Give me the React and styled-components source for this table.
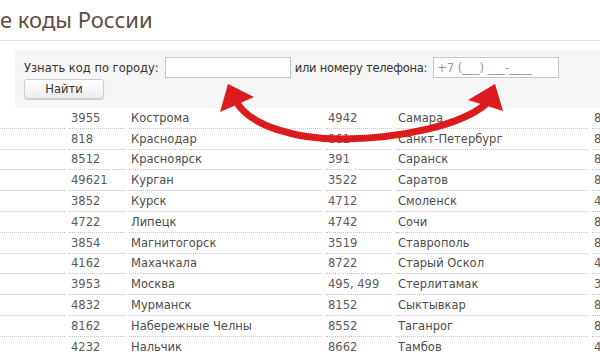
import React from "react";
import styled, { createGlobalStyle } from "styled-components";

const rows = [
  ["3955", "Кострома", "4942", "Самара", "8482"],
  ["818", "Краснодар", "861", "Санкт-Петербург", "8442"],
  ["8512", "Красноярск", "391", "Саранск", "8552"],
  ["49621", "Курган", "3522", "Саратов", "8422"],
  ["3852", "Курск", "4712", "Смоленск", "4872"],
  ["4722", "Липецк", "4742", "Сочи", "8512"],
  ["3854", "Магнитогорск", "3519", "Ставрополь", "8452"],
  ["4162", "Махачкала", "8722", "Старый Оскол", "4822"],
  ["3953", "Москва", "495, 499", "Стерлитамак", "3822"],
  ["4832", "Мурманск", "8152", "Сыктывкар", "8352"],
  ["8162", "Набережные Челны", "8552", "Таганрог", "8202"],
  ["4232", "Нальчик", "8662", "Тамбов", "4212"],
];

const App = () => {
  return (
    <Page>
      <GlobalStyle />
      <Title>е коды России</Title>

      <SearchPanel>
        <SearchRow>
          <Label>Узнать код по городу:</Label>
          <TextInput type="text" />
          <Label tight>или номеру телефона:</Label>
          <TextInput type="text" placeholder="+7 (___) ___-____" />
        </SearchRow>
        <FindButton>Найти</FindButton>
      </SearchPanel>

      <CodesTable>
        <tbody>
          {rows.map((r, i) => (
            <tr key={i}>
              <Cell w={63}></Cell>
              <Cell w={54} code>{r[0]}</Cell>
              <Cell w={191}>{r[1]}</Cell>
              <Cell w={64} code>{r[2]}</Cell>
              <Cell w={190}>{r[3]}</Cell>
              <Cell w={60} code>{r[4]}</Cell>
            </tr>
          ))}
        </tbody>
      </CodesTable>

      {/* red double arrow drawn over the page */}
      <ArrowLayer viewBox="0 0 600 355" width="600" height="355">
        <path
          d="M 237 103 C 252 127, 300 140, 345 139 C 400 138, 460 126, 486 104"
          fill="none"
          stroke="#dc1c1c"
          strokeWidth="7"
        />
        <polygon points="228,84 254,97 220,112" fill="#dc1c1c" />
        <polygon points="495,84 503,111 468,100" fill="#dc1c1c" />
      </ArrowLayer>
    </Page>
  );
};

const GlobalStyle = createGlobalStyle`
  html, body {
    margin: 0;
    padding: 0;
    background: #fff;
    overflow: hidden;
  }
  body {
    font-family: "DejaVu Sans", Verdana, sans-serif;
  }
`;

const Page = styled.div`
  position: relative;
  width: 600px;
  height: 355px;
  overflow: hidden;
`;

const Title = styled.h1`
  margin: 0;
  height: 41px;
  box-sizing: border-box;
  padding-top: 4px;
  font-family: "Noto Sans", "DejaVu Sans", sans-serif;
  font-weight: normal;
  font-size: 22px;
  line-height: 30px;
  color: #5e4d45;
  border-bottom: 1px solid #e2e2e2;
  white-space: nowrap;
`;

const SearchPanel = styled.div`
  margin: 9px 0 0 15px;
  padding: 7px 9px 9px;
  background: #f6f6f6;
  display: flex;
  flex-direction: column;
  align-items: flex-start;
  gap: 1px;
`;

const SearchRow = styled.div`
  display: flex;
  align-items: center;
`;

const Label = styled.span`
  font-size: 11.5px;
  letter-spacing: ${(p) => (p.tight ? "-0.25px" : "0")};
  color: #333;
  white-space: nowrap;
`;

const TextInput = styled.input`
  box-sizing: border-box;
  width: 126px;
  height: 21px;
  margin: 0 4px 0 6px;
  padding: 0 3px;
  border: 1px solid #c6c6c6;
  background: #fff;
  font-family: "DejaVu Sans", Verdana, sans-serif;
  font-size: 11.5px;
  color: #333;
  outline: none;
  &::placeholder {
    color: #9a9a9a;
  }
`;

const FindButton = styled.button`
  box-sizing: border-box;
  width: 80px;
  height: 20px;
  padding: 0;
  border: 1px solid #cfcfcf;
  border-radius: 3px;
  background: linear-gradient(#ffffff, #ececec);
  box-shadow: 0 1px 1px rgba(0, 0, 0, 0.15);
  font-family: "DejaVu Sans", Verdana, sans-serif;
  font-size: 11.5px;
  color: #333;
`;

const CodesTable = styled.table`
  margin-left: -4px;
  width: 662px;
  table-layout: fixed;
  border-collapse: separate;
  border-spacing: 4px 0;
`;

const Cell = styled.td`
  width: ${(p) => p.w}px;
  height: 19.8px;
  padding: 0 0 0 2px;
  border-bottom: 1px dotted #c4c4c4;
  font-size: 11.5px;
  color: ${(p) => (p.code ? "#5a5a5a" : "#4d4d4d")};
  white-space: nowrap;
  overflow: hidden;
  vertical-align: middle;
`;

const ArrowLayer = styled.svg`
  position: absolute;
  top: 0;
  left: 0;
  pointer-events: none;
`;

export default App;
